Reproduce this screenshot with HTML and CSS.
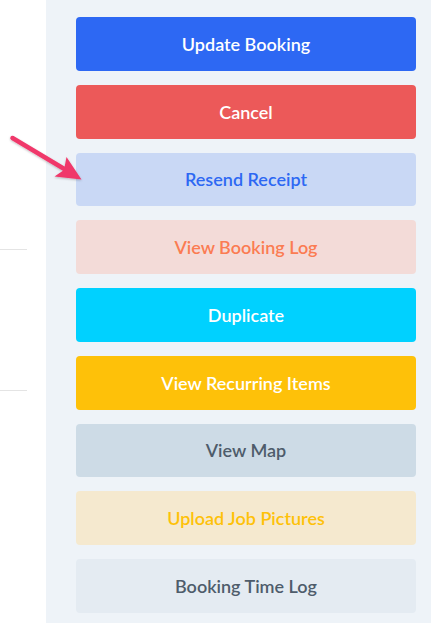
FILE: index.html
```html
<!DOCTYPE html>
<html>
<head>
<meta charset="utf-8">
<link rel="stylesheet" href="styles.css">
</head>
<body>
<div class="page">
  <div class="left">
    <div class="rule rule-1"></div>
    <div class="rule rule-2"></div>
  </div>
  <div class="panel">
    <button class="btn btn-primary">Update Booking</button>
    <button class="btn btn-danger">Cancel</button>
    <button class="btn btn-soft-blue">Resend Receipt</button>
    <button class="btn btn-soft-orange">View Booking Log</button>
    <button class="btn btn-info">Duplicate</button>
    <button class="btn btn-warning">View Recurring Items</button>
    <button class="btn btn-soft-gray">View Map</button>
    <button class="btn btn-soft-yellow">Upload Job Pictures</button>
    <button class="btn btn-light">Booking Time Log</button>
  </div>
  <svg class="arrow" width="90" height="190" viewBox="0 0 90 190">
    <defs>
      <filter id="sh" x="-20%" y="-20%" width="140%" height="140%">
        <feDropShadow dx="0" dy="1" stdDeviation="1" flood-color="#000" flood-opacity="0.25"/>
      </filter>
    </defs>
    <g filter="url(#sh)">
      <line x1="12.5" y1="138" x2="66" y2="170" stroke="#f0386b" stroke-width="4.5" stroke-linecap="round"/>
      <polygon points="66.5,157 81.5,179.5 54.5,176.5 64,170" fill="#f0386b"/>
    </g>
  </svg>
</div>
</body>
</html>
```
FILE: styles.css
```css
html, body {
  margin: 0;
  padding: 0;
  background: #ffffff;
}
body {
  font-family: Lato, "Open Sans", sans-serif;
}
.page {
  position: relative;
  display: flex;
  width: 431px;
  height: 623px;
  overflow: hidden;
}
.left {
  width: 46px;
  flex: none;
  display: flex;
  flex-direction: column;
}
.rule {
  width: 27px;
  height: 1px;
  background: #e4e4e4;
}
.rule-1 {
  margin-top: 249px;
}
.rule-2 {
  margin-top: 140px;
}
.panel {
  flex: 1;
  background: #eef3f8;
  padding: 17px 15px 0 30px;
  display: flex;
  flex-direction: column;
  gap: 14px;
}
.btn {
  height: 53.75px;
  border: none;
  border-radius: 4px;
  font-family: Lato, sans-serif;
  font-weight: 600;
  font-size: 18px;
  text-align: center;
  padding: 0;
  flex: none;
}
.btn-primary { background: #2d68f3; color: #ffffff; }
.btn-danger { background: #ec5959; color: #ffffff; }
.btn-soft-blue { background: #c9d8f5; color: #2d68f3; }
.btn-soft-orange { background: #f3dbd8; color: #fb7c52; }
.btn-info { background: #00d1ff; color: #ffffff; }
.btn-warning { background: #fec109; color: #ffffff; }
.btn-soft-gray { background: #cddbe6; color: #4e5c6b; }
.btn-soft-yellow { background: #f5e9cf; color: #fec109; }
.btn-light { background: #e4ebf2; color: #4e5c6b; }
.arrow {
  position: absolute;
  left: 0;
  top: 0;
}
```
